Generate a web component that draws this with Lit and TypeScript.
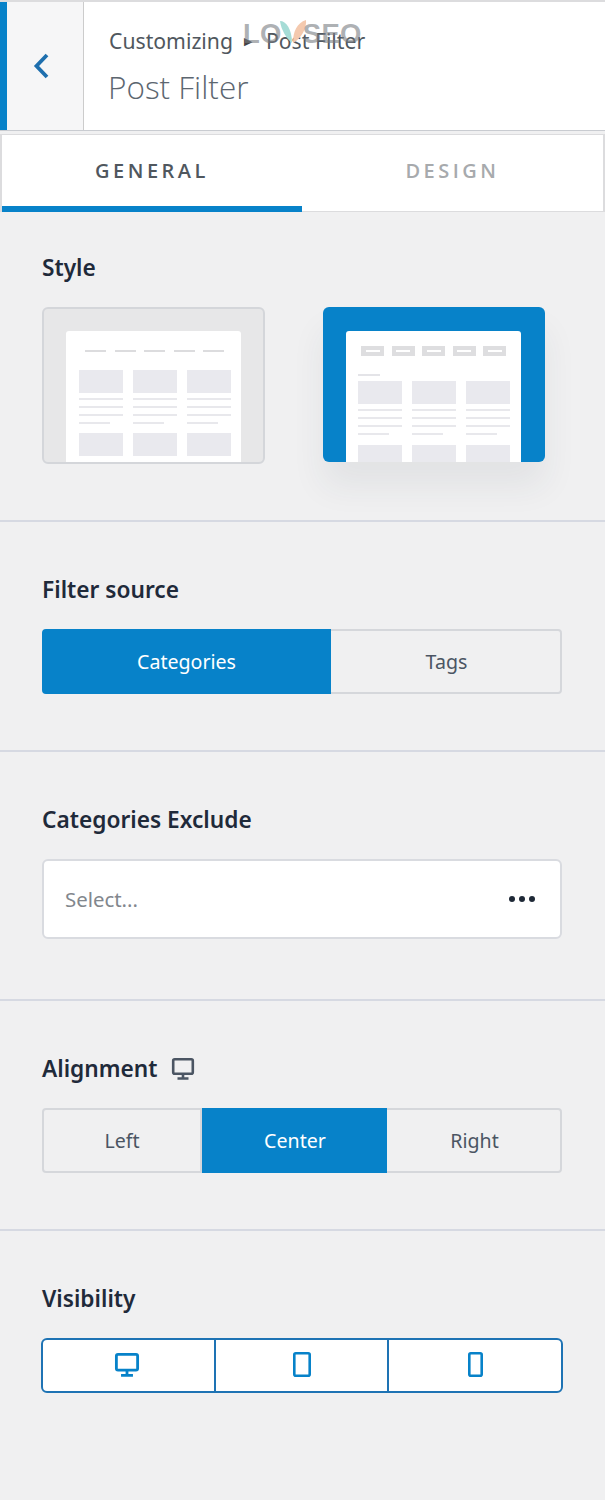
import { LitElement, html, css, svg } from "lit";
import { customElement } from "lit/decorators.js";

const desktop = svg`<rect x="2.2" y="2.2" width="19.600" height="14.600" rx="1.500" fill="none" stroke="currentColor" stroke-width="2.600"/><path d="M12 17v4M6.500 21.500h11" fill="none" stroke="currentColor" stroke-width="2.600"/>`;

@customElement("app-root")
export class AppRoot extends LitElement {
  static styles = css`
    :host { display: block; width: 605px; height: 1500px; overflow: hidden; background: #f0f0f1; font-family: "Noto Sans", "Open Sans", sans-serif; color: #1f2937; }
    * { box-sizing: border-box; }
    .header { position: relative; display: flex; height: 131px; background: #fff; border-top: 2px solid #dcdcde; border-bottom: 1px solid #c9ccd1; }
    .back { width: 84px; flex: none; display: flex; align-items: center; justify-content: center; padding-right: 8px; background: #f6f6f7; border-left: 7px solid #0782c9; border-right: 1px solid #ccc; color: #1e6fae; }
    .titles { padding: 24px 0 0 25px; }
    .crumb { font-size: 21.200px; line-height: 30px; color: #50575e; display: flex; align-items: center; }
    .crumb .arrow { font-size: 11px; margin: 0 14px 0 11px; color: #444; }
    .title { font-size: 31.500px; font-weight: 300; line-height: 44px; margin: 9px 0 0 -1px; color: #5c6670; font-family: "Open Sans", sans-serif; }
    .wm { position: absolute; left: 243px; top: 14px; display: flex; align-items: center; font: 700 27.500px/36px "Liberation Sans", sans-serif; letter-spacing: 0.3px; color: rgba(120,124,130,.6); }
    .wm svg { margin: -6px -5px 0 -4px; }
    .tabs { display: flex; height: 78px; margin-top: 3px; background: #fff; border: solid #dcdcde; border-width: 1px 2px 1px; }
    .tab { flex: 1; display: flex; align-items: center; justify-content: center; font-size: 20px; font-weight: 600; letter-spacing: 3.500px; color: #a7aaad; font-family: "Open Sans", sans-serif; border-bottom: 6px solid transparent; margin-bottom: -1px; }
    .tab.on { flex: none; width: 300px; color: #50575e; border-bottom-color: #0782c9; }
    .sec { padding: 40px 43px 0 42px; border-bottom: 2px solid #d6d9e2; }
    .label { display: flex; align-items: center; gap: 13px; font-size: 22.700px; font-weight: 600; line-height: 32px; color: #1f2a3a; height: 32px; }
    .s-style { height: 310px; padding-top: 40px; }
    .s-filter { height: 230px; padding-top: 52px; }
    .s-cat { height: 249px; padding-top: 52px; }
    .s-align { height: 230px; padding-top: 52px; }
    .s-vis { padding-top: 52px; border: none; }
    .opts { display: flex; gap: 58px; margin-top: 23px; }
    .thumb { width: 223px; height: 157px; border-radius: 6px; background: #e7e7e8; border: 2px solid #d4d6da; padding: 22px 22px 0; overflow: hidden; display: flex; }
    .thumb.on { width: 222px; background: #0782c9; border: none; height: 155px; padding: 24px 24px 0 23px; box-shadow: 0 24px 34px rgba(40,50,70,.07); }
    .page { flex: 1; background: #fff; border-radius: 3px 3px 0 0; overflow: hidden; padding: 19px 11px 0 13px; }
    .nav { display: flex; justify-content: space-between; padding: 0 6px; height: 20px; }
    .nav i { width: 21px; height: 2px; background: #dcdcde; }
    .grid { display: grid; grid-template-columns: repeat(3, 44px); column-gap: 10px; }
    .card { height: 23px; background: #e9e9ee; }
    .lines { display: flex; flex-direction: column; gap: 6px; padding: 5px 0 9px; }
    .lines i { height: 2px; background: #e8e8ec; }
    .lines i:last-child { width: 70%; }
    .on .page { padding: 15px 12px 0 12px; }
    .on .nav { height: auto; padding: 0 3px; }
    .on .nav i { width: 23px; height: 10px; background: #dedee0; display: flex; align-items: center; justify-content: center; }
    .on .nav i::after { content: ""; width: 14px; height: 2px; background: #fff; }
    .on .short { width: 22px; height: 2px; background: #e4e4e8; margin: 18px 0 5px; }
    .on .lines { padding: 5px 0 10px; }
    .seg { display: flex; height: 65px; margin-top: 23px; width: 520px; }
    .seg div { display: flex; align-items: center; justify-content: center; font-size: 19.600px; color: #4b5563; border: 2px solid #d5d7db; border-left-width: 0; }
    .seg div:first-child { border-left-width: 2px; border-radius: 4px 0 0 4px; }
    .seg div:last-child { border-radius: 0 4px 4px 0; }
    .seg div.on { background: #0782c9; border-color: #0782c9; color: #fff; }
    .w289 { width: 289px; } .w231 { width: 231px; padding-left: 2px; } .w160 { width: 160px; } .w185 { width: 185px; padding-left: 3px; } .w175 { width: 175px; padding-left: 2px; }
    .select { display: flex; align-items: center; justify-content: space-between; width: 520px; height: 80px; margin-top: 23px; padding: 0 25px 0 21px; background: #fff; border: 2px solid #d9dbe0; border-radius: 6px; font-size: 20.400px; color: #82878d; }
    .dots { display: flex; gap: 4px; }
    .dots i { width: 6px; height: 6px; border-radius: 50%; background: #1f2937; }
    .label svg { color: #4b5563; }
    .vis { display: flex; width: 522px; height: 55px; margin: 23px 0 0 -1px; background: #fff; border: 2px solid #1e73b4; border-radius: 6px; color: #0782c9; }
    .vis div { display: flex; align-items: center; justify-content: center; }
    .vis div + div { border-left: 2px solid #1e73b4; }
    .v1 { width: 171px; padding: 0 3px 2px 0; } .v2 { width: 173px; padding-bottom: 2px; } .v3 { flex: 1; padding-bottom: 2px; }
    .bigicon { width: 26px; height: 26px; }
  `;

  private grid() {
    const lines = html`<div class="lines"><i></i><i></i><i></i><i></i></div>`;
    return html`
      <div class="grid">
        ${[0, 1, 2].map(() => html`<div><div class="card"></div>${lines}</div>`)}
        ${[0, 1, 2].map(() => html`<div><div class="card"></div></div>`)}
      </div>`;
  }

  render() {
    const nav = html`<div class="nav"><i></i><i></i><i></i><i></i><i></i></div>`;
    return html`
      <div class="header">
        <div class="back">
          <svg width="18" height="28" viewBox="0 0 18 28"><path d="M15 3 4.500 14 15 25" fill="none" stroke="currentColor" stroke-width="3.800"/></svg>
        </div>
        <div class="titles">
          <div class="crumb">Customizing<span class="arrow">▶</span>Post Filter</div>
          <div class="title">Post Filter</div>
        </div>
        <div class="wm">LO<svg width="30" height="30" viewBox="0 0 30 30"><path d="M14 27C9 23 3 14 2 5c6 0 12 8 12 22Z" fill="#a5dcd6"/><path d="M15 27c0-12 4-20 13-23 1 8-5 19-13 23Z" fill="#f4c9ae"/></svg>SEO</div>
      </div>
      <div class="tabs">
        <div class="tab on">GENERAL</div>
        <div class="tab">DESIGN</div>
      </div>
      <div class="sec s-style">
        <div class="label">Style</div>
        <div class="opts">
          <div class="thumb"><div class="page">${nav}${this.grid()}</div></div>
          <div class="thumb on"><div class="page">${nav}<div class="short"></div>${this.grid()}</div></div>
        </div>
      </div>
      <div class="sec s-filter">
        <div class="label">Filter source</div>
        <div class="seg"><div class="on w289">Categories</div><div class="w231">Tags</div></div>
      </div>
      <div class="sec s-cat">
        <div class="label">Categories Exclude</div>
        <div class="select">Select...<span class="dots"><i></i><i></i><i></i></span></div>
      </div>
      <div class="sec s-align">
        <div class="label">Alignment
          <svg width="24" height="24" viewBox="0 0 24 24">${desktop}</svg></div>
        <div class="seg"><div class="w160">Left</div><div class="on w185">Center</div><div class="w175">Right</div></div>
      </div>
      <div class="sec s-vis">
        <div class="label">Visibility</div>
        <div class="vis">
          <div class="v1"><svg class="bigicon" viewBox="0 0 24 24">${desktop}</svg></div>
          <div class="v2"><svg width="18" height="25" viewBox="0 0 18 25"><rect x="1.300" y="1.300" width="15.400" height="22.400" rx="1.500" fill="none" stroke="currentColor" stroke-width="2.600"/></svg></div>
          <div class="v3"><svg width="15" height="25" viewBox="0 0 15 25"><rect x="1.300" y="1.300" width="12.400" height="22.400" rx="1.500" fill="none" stroke="currentColor" stroke-width="2.600"/></svg></div>
        </div>
      </div>
    `;
  }
}
